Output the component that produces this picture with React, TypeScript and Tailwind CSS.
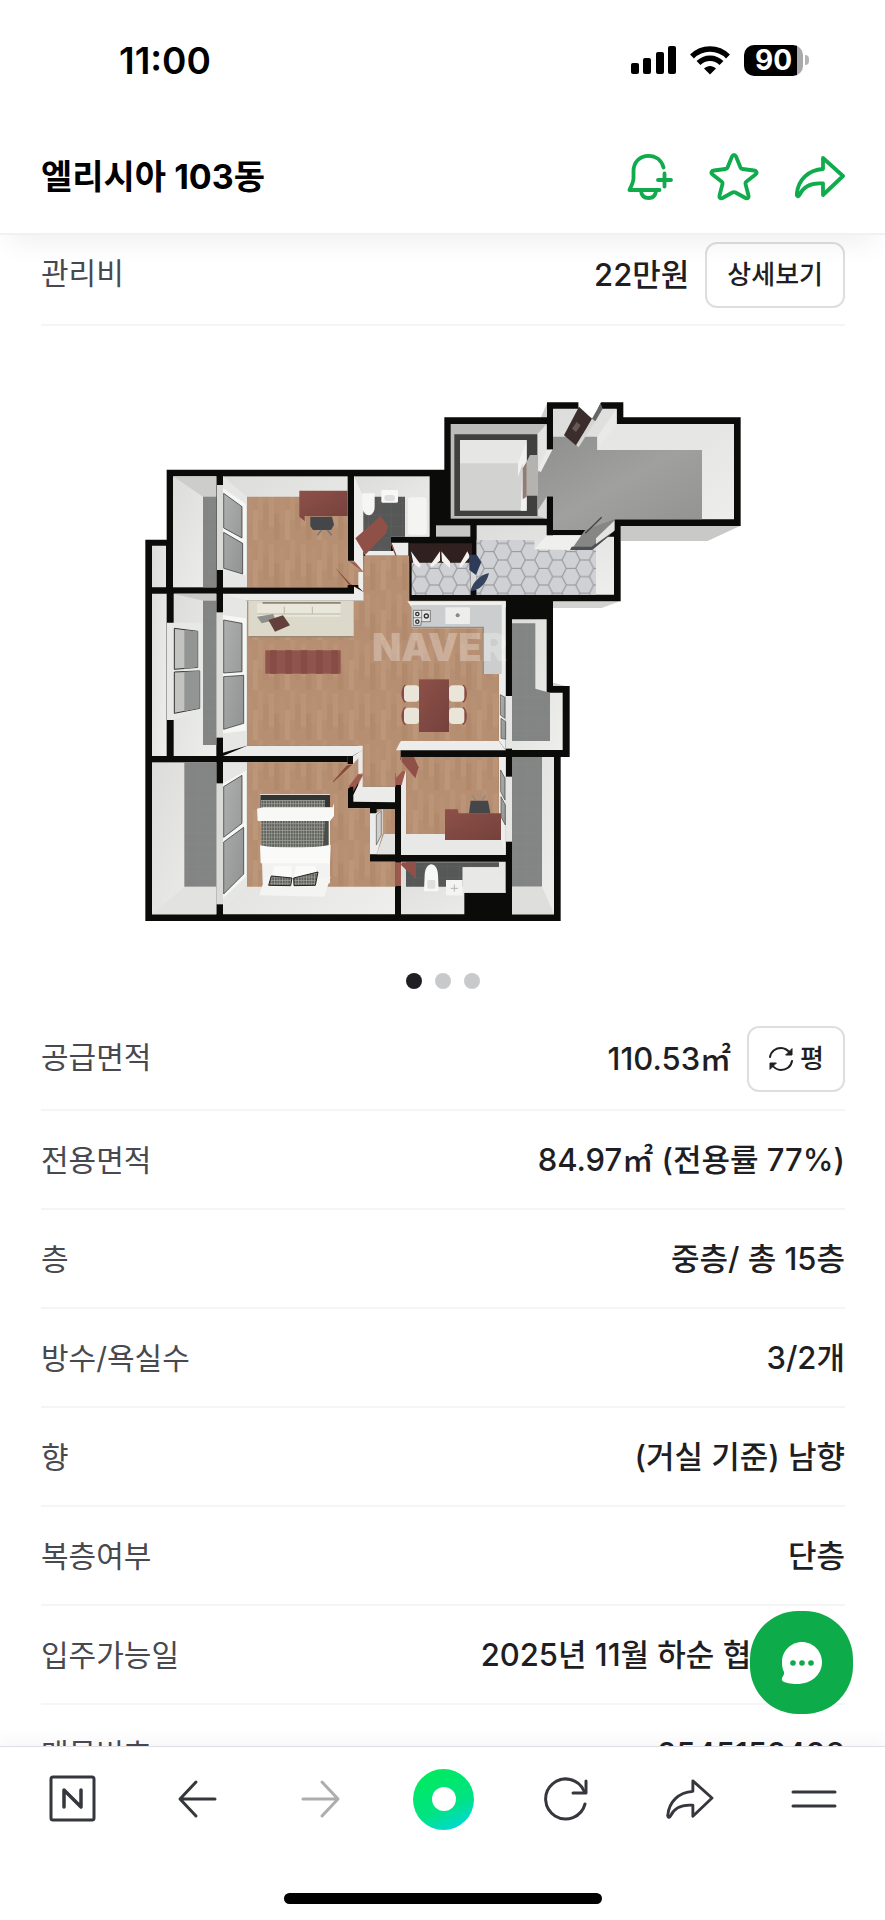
import { useState } from "react";
import type { ReactNode } from "react";

type InfoRow = {
  label: string;
  value: string;
};

const rows: InfoRow[] = [
  { label: "전용면적", value: "84.97㎡ (전용률 77%)" },
  { label: "층", value: "중층/ 총 15층" },
  { label: "방수/욕실수", value: "3/2개" },
  { label: "향", value: "(거실 기준) 남향" },
  { label: "복층여부", value: "단층" },
  { label: "입주가능일", value: "2025년 11월 하순 협의 가능" },
  { label: "매물번호", value: "2545152498" },
];

const slides = [0, 1, 2];

const SHARE_PATH =
  "M28 4 L48 22 L28 41 V29.500 C16 28.500 8 33 4.500 41 C3.500 43 1.500 42.500 1.800 40 C3 26 13 16 28 15 Z";

const StatusBar = () => (
  <div className="flex h-30 items-center justify-between pl-[119px] pr-[76px] text-black">
    <span className="text-[37px] leading-none font-semibold">11:00</span>
    <div className="flex items-center gap-3.5">
      <svg width="45" height="30" viewBox="0 0 45 30" aria-hidden="true">
        <rect x="0" y="18" width="8" height="11" rx="2" />
        <rect x="12" y="13" width="8" height="16" rx="2" />
        <rect x="25" y="7" width="8" height="22" rx="2" />
        <rect x="37" y="1" width="8" height="28" rx="2" />
      </svg>
      <svg width="40" height="30" viewBox="0 0 40 30" aria-hidden="true">
        <g fill="none" stroke="#000" strokeWidth="5.500">
          <path d="M2 11.500 C12 1.500 28 1.500 38 11.500" />
          <path d="M8.500 18 C15 11.500 25 11.500 31.500 18" />
        </g>
        <path d="M14 23.500 C17.500 20 22.500 20 26 23.500 L20 29.500 Z" />
      </svg>
      <div className="flex items-center gap-0.5">
        <div className="flex h-[31px] w-[59px] items-center justify-center rounded-[10px] bg-[linear-gradient(90deg,#000_90%,#a9a9a9_90%)] text-[28px] leading-none font-bold text-white">
          90
        </div>
        <div className="h-[10px] w-1 rounded-r-full bg-[#b5b5b5]" />
      </div>
    </div>
  </div>
);

const Header = () => (
  <header className="relative z-10 border-b-2 border-[#f1f1f2] bg-white shadow-[0_16px_28px_-10px_rgba(0,0,0,0.07)]">
    <StatusBar />
    <div className="flex h-[113px] items-center justify-between pr-10 pl-[41px]">
      <h1 className="text-[34px] leading-none font-bold text-black">
        엘리시아 103동
      </h1>
      <div className="flex items-center gap-9 text-[#10ab4c]">
        <button aria-label="알림 추가">
          <svg
            width="46"
            height="48"
            viewBox="0 0 46 48"
            fill="none"
            stroke="currentColor"
            strokeWidth="3.800"
            strokeLinecap="round"
            strokeLinejoin="round"
          >
            <path d="M36.500 14.500 C34.500 7 28.500 2.800 21.500 2.800 C12.500 2.800 6.500 9.500 6.500 18 V25 C6.500 29 5 31.500 2.500 37 H32.500" />
            <path d="M14 38 C14.500 42.500 17.500 45 21.500 45 C25.500 45 28.500 42.500 29 38" />
            <path d="M37.500 20.500 V33.500 M31 27 H44" />
          </svg>
        </button>
        <button aria-label="관심 매물">
          <svg
            width="50"
            height="48"
            viewBox="0 0 50 48"
            fill="none"
            stroke="currentColor"
            strokeWidth="3.800"
            strokeLinejoin="round"
          >
            <path d="M23 3.500 C24 1.500 26 1.500 27 3.500 L31.500 14.500 C31.800 15.300 32.500 16 33.500 16 L45 17.500 C47.500 17.800 48.500 20 46.500 21.500 L37.500 28.500 C36.500 29.300 36.300 30 36.500 31 L39.500 42.500 C40 45 38.500 46 36.500 45 L26.500 39.500 C25.500 39 24.500 39 23.500 39.500 L13.500 45 C11.500 46 10 45 10.500 42.500 L13.500 31 C13.700 30 13.500 29.300 12.500 28.500 L3.500 21.500 C1.500 20 2.500 17.800 5 17.500 L16.500 16 C17.500 16 18.200 15.300 18.500 14.500 Z" />
          </svg>
        </button>
        <button aria-label="공유">
          <svg
            width="50"
            height="46"
            viewBox="0 0 50 46"
            fill="none"
            stroke="currentColor"
            strokeWidth="3.800"
            strokeLinejoin="round"
          >
            <path d={SHARE_PATH} />
          </svg>
        </button>
      </div>
    </div>
  </header>
);

const DiningChair = ({ x, y, flip }: { x: number; y: number; flip?: boolean }) => (
  <g transform={`translate(${x} ${y})${flip ? " scale(-1 1)" : ""}`}>
    <path d="M10 0 C-3 12 -3 42 10 54 L16 50 V4 Z" fill="#8a4a43" />
    <rect x="8" y="2" width="46" height="49" rx="12" fill="#e9e5d8" />
  </g>
);

const FloorPlan = () => (
  <svg
    viewBox="39 30 1800 1570"
    className="mx-auto w-[600px] max-w-full"
    role="img"
    aria-label="평면도"
  >
    <defs>
      <pattern id="wood" width="96" height="150" patternUnits="userSpaceOnUse">
        <rect width="96" height="150" fill="#b68f72" />
        <rect x="0" y="0" width="16" height="90" fill="#ba9376" />
        <rect x="16" y="40" width="16" height="80" fill="#b38b6e" />
        <rect x="32" y="10" width="16" height="100" fill="#bb9477" />
        <rect x="48" y="70" width="16" height="80" fill="#b18a6c" />
        <rect x="64" y="20" width="16" height="80" fill="#b89174" />
        <rect x="80" y="60" width="16" height="90" fill="#bc9679" />
        <path
          d="M16 0V150M32 0V150M48 0V150M64 0V150M80 0V150"
          stroke="#a97d5b"
          strokeOpacity="0.2"
        />
      </pattern>
      <pattern
        id="hex"
        width="82"
        height="50"
        patternUnits="userSpaceOnUse"
        patternTransform="translate(11 10)"
      >
        <rect width="82" height="50" fill="#d0d1d4" />
        <path
          d="M0 25H14L27 0H55L68 25H82M14 25L27 50H55L68 25"
          fill="none"
          stroke="#909296"
          strokeWidth="3"
        />
      </pattern>
      <pattern id="tile" width="34" height="34" patternUnits="userSpaceOnUse">
        <rect width="34" height="34" fill="#838484" />
        <path d="M0 0H34M0 0V34" stroke="#8a8b8b" strokeWidth="2" />
      </pattern>
      <pattern id="darktile" width="34" height="34" patternUnits="userSpaceOnUse">
        <rect width="34" height="34" fill="#565757" />
        <path d="M0 0H34M0 0V34" stroke="#656666" strokeWidth="2" />
      </pattern>
      <pattern id="plaid" width="8" height="10" patternUnits="userSpaceOnUse">
        <rect width="8" height="10" fill="#5f625c" />
        <path d="M0 0H8M0 0V10" stroke="#a5a69e" strokeWidth="4" />
      </pattern>
      <linearGradient id="wall" x1="0" y1="0" x2="1" y2="1">
        <stop offset="0" stopColor="#dcdcda" />
        <stop offset="1" stopColor="#eeeeec" />
      </linearGradient>
      <linearGradient id="concrete" x1="0" y1="0" x2="1" y2="1">
        <stop offset="0" stopColor="#8f908e" />
        <stop offset="0.5" stopColor="#a0a19f" />
        <stop offset="1" stopColor="#929391" />
      </linearGradient>
      <linearGradient id="glass" x1="0" y1="0" x2="1" y2="1">
        <stop offset="0" stopColor="#aeafaf" />
        <stop offset="1" stopColor="#919292" />
      </linearGradient>
      <linearGradient id="redwood" x1="0" y1="0" x2="1" y2="1">
        <stop offset="0" stopColor="#8d5049" />
        <stop offset="1" stopColor="#75413c" />
      </linearGradient>
    </defs>

    {/* outer faces below the walls */}
    <path d="M1472 408H1830L1733 453H1472Z" fill="#c9c9c7" />
    <path d="M1269 634H1470L1415 654H1269Z" fill="#d2d2d0" />
    <path d="M1232 84L1252 37V84ZM1269 878L1317 890H1269Z" fill="#cfcfcd" />

    {/* wall mass */}
    <path
      d="M110 239H943V82H1251V37H1480V82H1832V408H1472V634H1269V888H1319V1101H1292V1593H46V449H110Z"
      fill="#0b0b0a"
    />

    {/* left balconies */}
    <path d="M66 467H108V592H66ZM66 611H110V1098H66Z" fill="url(#wall)" />
    <rect x="129" y="259" width="130" height="333" fill="url(#wall)" />
    <path d="M129 259H259V320H219Z" fill="#cdcdcb" />
    <rect x="219" y="320" width="40" height="272" fill="url(#tile)" />
    <rect x="131" y="611" width="128" height="487" fill="url(#wall)" />
    <path d="M131 611H259V632H219Z" fill="#c9c9c7" />
    <rect x="219" y="632" width="40" height="433" fill="url(#tile)" />
    <path d="M111 698H218V960L131 990H111Z" fill="#e8e8e6" />
    <path
      d="M133 715L203 724V832L133 838ZM133 846L209 843V955L133 970Z"
      fill="#c3c4c2"
      stroke="#333"
      strokeWidth="3"
    />
    <path d="M163 720L203 724V832L163 836ZM163 845L209 843V955L163 964Z" fill="#939494" />
    <rect x="66" y="1117" width="193" height="456" fill="url(#wall)" />
    <path d="M66 1573L163 1490H259V1573Z" fill="#e2e2e0" />
    <rect x="163" y="1117" width="96" height="373" fill="url(#tile)" />

    {/* upper left room */}
    <rect x="279" y="259" width="374" height="333" fill="url(#wall)" />
    <path d="M351 320H653V512H700V585H653V592H351Z" fill="url(#wood)" />
    <path d="M279 259L351 320V592H279Z" fill="#e6e6e4" />
    <rect x="261" y="285" width="18" height="255" fill="#dadad8" />
    <path d="M279 295L348 342V556L279 538Z" fill="#f6f6f5" />
    <path
      d="M281 310L336 350V444L281 414ZM281 427L338 460V552L281 535Z"
      fill="url(#glass)"
      stroke="#222"
      strokeWidth="2"
    />
    <path d="M508 302H653V378H524V393L508 380Z" fill="url(#redwood)" />
    <path d="M541 380H606L612 404L603 420H549L541 408Z" fill="#44464a" />
    <path d="M562 436L574 420M605 436L592 420" stroke="#777" strokeWidth="5" />
    <path d="M613 530L662 582L700 606L660 588Z" fill="#8a4a3a" />
    <path d="M655 512L700 524V546Z" fill="#9c5a4e" />
    <path d="M685 546H701V606L685 592Z" fill="#eeeeec" />

    {/* upper bathroom */}
    <rect x="672" y="259" width="227" height="181" fill="url(#wall)" />
    <path d="M672 259L700 320V545L672 512Z" fill="#ededeb" />
    <path d="M700 320H825V440H783V485H700Z" fill="url(#darktile)" />
    <path d="M700 483H790L785 458H835V497H706Z" fill="#ececea" />
    <rect x="825" y="310" width="72" height="130" fill="#e6e6e5" />
    <rect x="834" y="322" width="56" height="112" rx="8" fill="#f4f4f3" />
    <path d="M697 310H734V350C734 384 699 384 697 350Z" fill="#f6f6f5" />
    <rect x="754" y="300" width="50" height="38" rx="4" fill="#f8f8f7" />
    <rect x="763" y="315" width="32" height="18" rx="8" fill="#dedede" />
    <path d="M676 445L752 378L774 408L768 430L706 494Z" fill="#8f5048" />
    <path d="M783 458L798 497" stroke="#8a4a43" strokeWidth="4" />

    {/* living room and hall */}
    <path
      d="M351 632H700V497H838V632H1127V1053H812V1150H797V1190H685V1067H351Z"
      fill="url(#wood)"
    />
    <path d="M653 585H672V609H653Z" fill="#0b0b0a" />
    <path d="M279 611H672V590L701 606V632H279Z" fill="#ececea" />
    <path d="M279 611L351 632V1067L279 1088Z" fill="#e6e6e4" />
    <path d="M259 667H279V1043H259Z" fill="#dcdcda" />
    <path d="M279 675L348 685V1022L279 1030Z" fill="#f6f6f5" />
    <path
      d="M281 690L336 700V845L281 849ZM281 860L341 856V1000L281 1018Z"
      fill="url(#glass)"
      stroke="#222"
      strokeWidth="2"
    />
    <path d="M279 1098L351 1067H698V1080L668 1098Z" fill="#ececea" />
    <path d="M355 632H671V740H355Z" fill="#dcd9cb" />
    <path d="M381 640H632V680H381Z" fill="#e9e6da" />
    <path d="M398 636H632V641H398Z" fill="#8c8574" />
    <path d="M463 650V672M547 650V672M381 672H632" stroke="#bdb8a6" strokeWidth="3" />
    <path d="M355 740H671" stroke="#8f7a66" strokeWidth="3" />
    <path d="M381 680L430 672L436 690L395 700Z" fill="#8f908c" />
    <path d="M415 690L459 676L480 706L435 725Z" fill="#64403a" />
    <rect x="406" y="781" width="226" height="70" fill="#8f544c" />
    <path
      d="M430 781V851M476 781V851M522 781V851M568 781V851M614 781V851"
      stroke="#864c45"
      strokeWidth="20"
    />

    {/* shoe closet and entrance */}
    <path d="M838 460H1026V518H838Z" fill="#30201f" />
    <path d="M845 518H1022V615H845Z" fill="url(#hex)" />
    <path
      d="M843 484L873 525L868 534L850 520ZM901 525L930 484V512L905 532ZM934 484L960 515V534L936 514ZM988 525L1012 484L1020 500L992 534Z"
      fill="#f2f2f0"
    />
    <rect x="918" y="406" width="103" height="34" fill="#c6c6c4" />
    <path d="M1040 406H1250V436H1365V440H1452V614H1040Z" fill="url(#wall)" />
    <path d="M1022 520H1040V600H1022Z" fill="#d8d8d8" />
    <path d="M1040 450H1213V478H1398V614H1040Z" fill="url(#hex)" />
    <path d="M1213 478L1250 436H1365L1325 480Z" fill="#efefed" />
    <path d="M1018 494L1040 494L1054 516L1038 555L1018 540Z" fill="#2e3b58" />
    <path d="M1022 600C1030 575 1050 555 1077 549C1070 580 1050 600 1022 604Z" fill="#35435f" />

    {/* elevator */}
    <rect x="962" y="102" width="288" height="284" fill="#bcbcba" />
    <path d="M1250 102V180L1222 250V133Z" fill="#e4e4e2" />
    <path d="M973 133H1222V378H973Z" fill="#40403f" />
    <rect x="990" y="150" width="200" height="212" fill="#d2d2d0" />
    <path d="M990 150H1190L1164 220H990Z" fill="#e6e6e4" />
    <path d="M1190 150V362L1172 362L1178 220L1164 260V218Z" fill="#f1f1ef" />
    <path d="M1200 195H1224V317H1190V215Z" fill="#b5b3b0" />
    <path d="M1178 235L1190 215V320L1178 328Z" fill="#8e7e77" />

    {/* landing */}
    <path d="M1269 56H1460V102H1812V388H1453V420H1269Z" fill="url(#wall)" />
    <path
      d="M1269 140H1402V180H1716V388H1453V420H1269V320H1251L1224 378V250L1262 178Z"
      fill="url(#concrete)"
    />
    <path d="M1224 240L1250 178H1268L1232 247Z" fill="#ecebe9" />
    <path d="M1224 378V360L1250 320V386Z" fill="#dcdcda" />
    <path d="M1251 84H1269V178H1251ZM1251 320H1269V436H1251Z" fill="#0b0b0a" />
    <path d="M1402 180V140L1460 56V102L1716 180Z" fill="#e9e9e7" />
    <path d="M1460 102H1812L1716 180H1402Z" fill="#e6e6e4" />
    <path d="M1345 30H1416L1392 82H1346Z" fill="#fff" />
    <path d="M1347 50L1386 86L1340 168L1302 136Z" fill="#3a2d2b" />
    <path d="M1386 88L1396 94L1346 172L1338 166Z" fill="#d5d5d3" />
    <path d="M1386 86L1412 40L1418 56L1396 94Z" fill="#666" />
    <path d="M1340 96L1352 106L1338 126L1326 116Z" fill="#665a57" />
    <path d="M1365 420L1453 388V422L1390 478H1325Z" fill="#868785" />
    <path d="M1325 470H1385L1440 425L1440 436L1386 480H1320Z" fill="#4d4f50" />
    <path d="M1366 430L1415 382" stroke="#444" strokeWidth="4" />
    <path d="M1398 445L1453 392V422L1398 462Z" fill="#e4e4e2" />

    {/* kitchen */}
    <path d="M832 634H1127V652H845Z" fill="#f0f0ee" />
    <path d="M1127 634V1081L1107 1053V645Z" fill="#eeeeec" />
    <path d="M845 645H1115V852H1060V715H845Z" fill="#cbcdce" />
    <path d="M845 712H1060V852" fill="none" stroke="#8d8e8e" strokeWidth="4" />
    <rect x="946" y="652" width="74" height="50" rx="4" fill="#ededeb" />
    <circle cx="983" cy="676" r="6" fill="#888" />
    <path d="M850 661H901V695H873V706H850Z" fill="#e8e8e8" stroke="#555" strokeWidth="2" />
    <path d="M875 660V696M849 683H875" stroke="#555" strokeWidth="2" />
    <g fill="none" stroke="#333" strokeWidth="4">
      <circle cx="862" cy="672" r="5" />
      <circle cx="862" cy="695" r="5" />
      <circle cx="889" cy="678" r="6" />
    </g>
    <DiningChair x={814} y={884} />
    <DiningChair x={814} y={951} />
    <DiningChair x={1011} y={884} flip />
    <DiningChair x={1011} y={951} flip />
    <rect x="867" y="868" width="90" height="158" fill="url(#redwood)" />
    <path d="M798 1081L812 1053H1107L1127 1081Z" fill="#ececea" />
    <rect x="1127" y="918" width="19" height="158" fill="#e6e6e4" />
    <path
      d="M1111 914L1125 922V985L1111 975ZM1113 985L1127 995V1048L1113 1045Z"
      fill="url(#glass)"
      stroke="#444"
      strokeWidth="2"
    />

    {/* right balconies */}
    <path d="M1146 688H1250V908H1298V1080H1146Z" fill="url(#wall)" />
    <path d="M1146 700H1216V896L1260 908V1053H1146Z" fill="url(#tile)" />
    <rect x="1146" y="1101" width="126" height="472" fill="url(#wall)" />
    <rect x="1146" y="1101" width="90" height="389" fill="url(#tile)" />
    <path d="M1146 1490H1236L1272 1573H1146Z" fill="#dededc" />

    {/* main bedroom */}
    <path d="M279 1117H653V1255H720V1415H795V1573H279Z" fill="url(#wall)" />
    <path d="M351 1117H653V1255H720V1415H797V1490H351Z" fill="url(#wood)" />
    <path d="M653 1117V1098H698V1160L653 1197Z" fill="url(#wood)" />
    <path d="M653 1098H669V1122H653Z" fill="#0b0b0a" />
    <path d="M669 1098L698 1080V1150L685 1152V1105L669 1122Z" fill="#eaeae8" />
    <path d="M279 1117H351V1490L279 1560Z" fill="#e6e6e4" />
    <path d="M259 1180H279V1543H259Z" fill="#dadad8" />
    <path d="M279 1180L348 1142V1460L279 1525Z" fill="#f6f6f5" />
    <path
      d="M281 1190L336 1156V1300L281 1342ZM281 1356L341 1312V1452L281 1512Z"
      fill="url(#glass)"
      stroke="#222"
      strokeWidth="2"
    />
    <path d="M610 1175L650 1128L664 1125Z" fill="#8a4a3a" stroke="#8a4a3a" strokeWidth="3" />
    <path d="M655 1190L685 1152L698 1155L670 1205V1190Z" fill="#9c5a4e" />
    <path d="M670 1235V1215L698 1158V1190H795V1237Z" fill="#ebebe9" />
    <path d="M390 1213H600V1480H398Z" fill="#f2f2f0" />
    <path d="M391 1215H600V1253H391Z" fill="#333533" />
    <rect x="393" y="1230" width="192" height="26" fill="url(#plaid)" />
    <path d="M393 1293H594V1372H393Z" fill="url(#plaid)" />
    <path d="M585 1293H596V1368H580Z" fill="#4b4d4a" />
    <path d="M381 1256L400 1252H608L612 1240V1278L600 1293H383Z" fill="#f8f8f7" />
    <path d="M390 1366C450 1378 540 1376 602 1364L600 1420H392Z" fill="#fafaf9" />
    <path d="M405 1460H602L583 1520L388 1516Z" fill="#f4f4f2" />
    <path d="M432 1428H485V1462H425ZM497 1428H556L562 1462H492Z" fill="#fafaf9" />
    <path
      d="M424 1458L486 1464L482 1487L416 1486ZM491 1464L564 1446L556 1486L492 1487Z"
      fill="url(#plaid)"
      stroke="#222"
      strokeWidth="3"
    />

    {/* closet */}
    <path d="M740 1257H795V1393H740Z" fill="url(#wood)" />
    <path d="M740 1393L762 1332H795V1393Z" fill="#e2e2e0" />
    <path d="M720 1270H738L758 1257V1330L740 1393H720Z" fill="#ececea" />
    <path d="M739 1275L754 1262V1335L739 1365Z" fill="#cfcfcd" stroke="#555" strokeWidth="2" />

    {/* small room */}
    <rect x="813" y="1101" width="314" height="294" fill="url(#wall)" />
    <path d="M813 1101H1107V1332H828V1150H813Z" fill="url(#wood)" />
    <path d="M815 1395V1180L828 1140V1332Z" fill="#eaeae8" />
    <path d="M815 1395L828 1332H1113L1127 1395Z" fill="#e8e8e6" />
    <path d="M797 1110H813V1185H797Z" fill="url(#wood)" />
    <path d="M797 1185V1165L818 1142L826 1145L815 1185Z" fill="#9c5a4e" />
    <path d="M815 1101H852L866 1132L856 1165L815 1115Z" fill="#8f5048" />
    <path d="M1107 1101H1127V1395L1113 1350Z" fill="#ededeb" />
    <rect x="1127" y="1160" width="19" height="195" fill="#e6e6e4" />
    <path
      d="M1112 1140L1125 1165V1230L1112 1205ZM1113 1220L1126 1245V1305L1113 1280Z"
      fill="url(#glass)"
      stroke="#444"
      strokeWidth="2"
    />
    <path d="M945 1258H983L986 1270H1113V1350H945Z" fill="url(#redwood)" />
    <path d="M1017 1270L1022 1232H1074L1081 1270Z" fill="#44464a" />
    <path d="M1028 1216L1038 1232M1066 1216L1056 1232" stroke="#888" strokeWidth="4" />

    {/* lower bathroom */}
    <path d="M813 1415H1127V1508H1003V1573H813Z" fill="url(#wall)" />
    <path d="M828 1417H1107V1432H998V1490H828Z" fill="url(#darktile)" />
    <path d="M797 1417H813V1488H797Z" fill="#9c5a4e" />
    <path d="M815 1417H858V1468L813 1425Z" fill="#8f5048" />
    <path d="M882 1504L884 1455C886 1412 922 1412 924 1455L926 1504Z" fill="#f7f7f6" />
    <rect x="892" y="1470" width="24" height="26" rx="4" fill="#dfdfde" />
    <path d="M998 1432H1107L1127 1508H998Z" fill="#e8e8e6" />
    <rect x="948" y="1470" width="50" height="46" fill="#f4f4f3" />
    <path d="M973 1484V1505M962 1495H984" stroke="#b5b5b5" strokeWidth="3" />

    <text
      x="726"
      y="814"
      fontSize="114"
      fontWeight="900"
      fill="#fff"
      fillOpacity="0.3"
    >
      NAVER
    </text>
  </svg>
);

const Row = ({ label, children }: { label: string; children: ReactNode }) => (
  <div className="flex min-h-[99px] items-center justify-between border-b-2 border-[#f5f5f6]">
    <dt className="text-[30px] leading-9 text-[#48484f]">{label}</dt>
    <dd className="flex items-center gap-4 text-[31px] leading-9 font-medium text-[#1e1e23]">
      {children}
    </dd>
  </div>
);

const ToolButton = ({ label, children }: { label: string; children: ReactNode }) => (
  <button
    aria-label={label}
    className="flex h-16 w-16 items-center justify-center text-[#35373d] disabled:text-[#adadad]"
    disabled={label === "앞으로"}
  >
    {children}
  </button>
);

const line = {
  fill: "none",
  stroke: "currentColor",
  strokeWidth: 3,
  strokeLinecap: "round" as const,
  strokeLinejoin: "round" as const,
};

const BottomBar = () => (
  <footer className="relative z-10 border-t border-[#dedee4] bg-white shadow-[0_-4px_16px_rgba(60,70,110,0.06)]">
    <nav className="flex h-26 items-center justify-between pr-[39px] pl-[41px]">
      <ToolButton label="네이버 홈">
        <svg width="48" height="48" viewBox="0 0 48 48" {...line}>
          <rect x="2" y="2" width="43" height="43" rx="2" />
          <path d="M15 32V15L32 32V15" strokeWidth="3.500" />
        </svg>
      </ToolButton>
      <ToolButton label="뒤로">
        <svg width="40" height="40" viewBox="0 0 40 40" {...line}>
          <path d="M19 3L3 20L19 37M3 20H38" />
        </svg>
      </ToolButton>
      <ToolButton label="앞으로">
        <svg width="40" height="40" viewBox="0 0 40 40" {...line}>
          <path d="M21 3L37 20L21 37M37 20H2" />
        </svg>
      </ToolButton>
      <button
        aria-label="그린닷"
        className="flex h-[61px] w-[61px] items-center justify-center rounded-full bg-[linear-gradient(155deg,#00ea5e_10%,#00e383_60%,#00d5f0_100%)]"
      >
        <span className="h-6 w-6 rounded-full bg-white" />
      </button>
      <ToolButton label="새로고침">
        <svg width="46" height="46" viewBox="0 0 46 46" {...line}>
          <path d="M42 28A20 20 0 1 1 41 15" />
          <path d="M43 5V17H30" />
        </svg>
      </ToolButton>
      <ToolButton label="공유하기">
        <svg width="48" height="44" viewBox="0 0 50 46" {...line}>
          <path d={SHARE_PATH} />
        </svg>
      </ToolButton>
      <ToolButton label="메뉴">
        <svg width="48" height="24" viewBox="0 0 48 24" {...line}>
          <path d="M3 5H45M3 19H45" />
        </svg>
      </ToolButton>
    </nav>
    <div className="flex h-[69px] items-end justify-center pb-4">
      <div className="h-[11px] w-[318px] rounded-full bg-black" />
    </div>
  </footer>
);

const App = () => {
  const [slide, setSlide] = useState<number>(0);
  const [pyeong, setPyeong] = useState<boolean>(false);

  return (
    <div className="relative flex h-screen flex-col overflow-hidden bg-white font-['Inter','Noto_Sans_CJK_KR',sans-serif]">
      <Header />
      <main className="min-h-0 flex-1 overflow-y-auto pr-10 pl-[41px] [scrollbar-width:none]">
        <dl>
          <div className="flex items-center justify-between border-b-2 border-[#f5f5f6] pt-[7px] pb-4">
            <dt className="pb-1 text-[30px] leading-9 text-[#48484f]">관리비</dt>
            <dd className="flex items-center gap-4 text-[31px] leading-9 font-medium text-[#1e1e23]">
              22만원
              <button className="h-[66px] rounded-xl border-2 border-[#dedee0] px-5 text-[26px]">
                상세보기
              </button>
            </dd>
          </div>
        </dl>

        <section className="pt-[74px] pb-5">
          <FloorPlan />
          <div className="mt-[50px] flex justify-center gap-[13px]">
            {slides.map((index) => (
              <button
                key={index}
                aria-label={`${index + 1}번째 이미지`}
                onClick={() => setSlide(index)}
                className={`h-4 w-4 rounded-full ${
                  slide === index ? "bg-[#1e1e23]" : "bg-[#c8c9cb]"
                }`}
              />
            ))}
          </div>
        </section>

        <dl>
          <div className="flex items-center justify-between border-b-2 border-[#f5f5f6] py-[17px]">
            <dt className="pb-1 text-[30px] leading-9 text-[#48484f]">공급면적</dt>
            <dd className="flex items-center gap-4 text-[31px] leading-9 font-medium text-[#1e1e23]">
              {pyeong ? "33.43평" : "110.53㎡"}
              <button
                onClick={() => setPyeong(!pyeong)}
                className="flex h-[66px] items-center gap-1.5 rounded-xl border-2 border-[#dedee0] px-[19px] text-[26px]"
              >
                <svg width="26" height="26" viewBox="0 0 26 26" {...line} strokeWidth={2}>
                  <path d="M2 11C3 5 8 2 13 2C17 2 20 4 23 8M24 15C23 21 18 24 13 24C9 24 6 22 3 18" />
                  <path d="M24 3V9H18ZM2 23V17H8Z" fill="currentColor" strokeWidth={1} />
                </svg>
                {pyeong ? "㎡" : "평"}
              </button>
            </dd>
          </div>
          {rows.map((row) => (
            <Row key={row.label} label={row.label}>
              {row.value}
            </Row>
          ))}
        </dl>
      </main>
      <button
        aria-label="채팅 문의"
        className="absolute right-8 bottom-[206px] z-20 flex h-[103px] w-[103px] items-center justify-center rounded-[48px] bg-[#0dab4a]"
      >
        <svg width="42" height="44" viewBox="0 0 42 44" aria-hidden="true">
          <path
            d="M21 1C32 1 41 10 41 21C41 34 30 43 16 43C10 43 4 42 1.500 40C-1 37 4 35 3 31C1.500 28 1 25 1 21C1 10 10 1 21 1Z"
            fill="#fff"
          />
          <g fill="#0dab4a">
            <circle cx="12" cy="22" r="2.800" />
            <circle cx="21" cy="22" r="2.800" />
            <circle cx="30" cy="22" r="2.800" />
          </g>
        </svg>
      </button>
      <BottomBar />
    </div>
  );
};

export default App;
